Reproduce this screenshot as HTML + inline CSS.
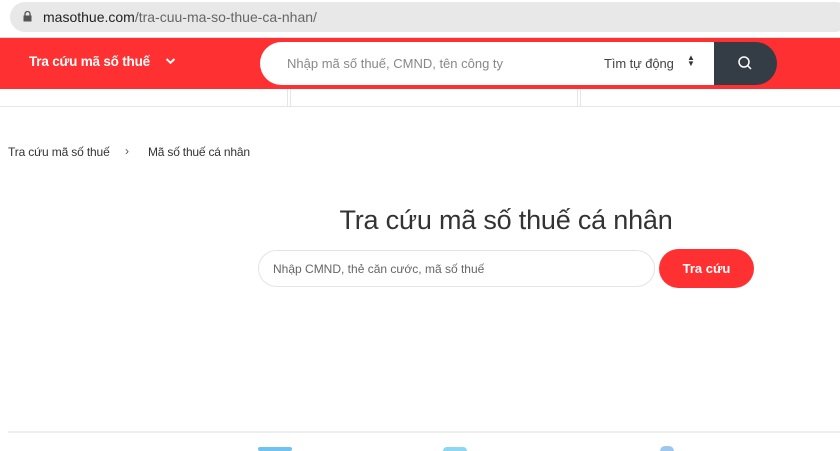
<!DOCTYPE html>
<html><head><meta charset="utf-8"><style>
*{margin:0;padding:0;box-sizing:border-box}
body{width:840px;height:450px;overflow:hidden;background:#fff;font-family:"Liberation Sans",Arial,sans-serif;position:relative}
.a{position:absolute}
</style></head><body>
<div class="a" style="left:0;top:0;width:840px;height:37px;background:#fff"></div>
<div class="a" style="left:10px;top:2px;width:840px;height:30px;background:#e8e8e8;border-radius:15px"></div>
<svg class="a" style="left:23px;top:11px" width="9" height="11" viewBox="0 0 9 11"><rect x="0.5" y="4.5" width="8" height="6" fill="#555"/><path d="M2 5V3a2.5 2.5 0 0 1 5 0v2" stroke="#555" stroke-width="1.3" fill="none"/></svg>
<div class="a" style="left:43px;top:9px;font-size:14px;color:#222">masothue.com<span style="color:#666">/tra-cuu-ma-so-thue-ca-nhan/</span></div>
<div class="a" style="left:0;top:37px;width:840px;height:1px;background:#ddd"></div>
<div class="a" style="left:0;top:38px;width:840px;height:51px;background:#fe3031"></div>
<div class="a" style="left:29px;top:54px;font-size:13.5px;font-weight:bold;color:#fff;letter-spacing:-0.2px">Tra cứu mã số thuế</div>
<svg class="a" style="left:165px;top:57px" width="11" height="8" viewBox="0 0 11 8"><path d="M1.5 2l4 3.8L9.5 2" stroke="#fff" stroke-width="2" fill="none"/></svg>
<div class="a" style="left:260px;top:42px;width:470px;height:43px;background:#fff;border-radius:22px 0 0 22px"></div>
<div class="a" style="left:287px;top:56px;font-size:13px;color:#888">Nhập mã số thuế, CMND, tên công ty</div>
<div class="a" style="left:604px;top:56px;font-size:13px;color:#444;letter-spacing:-0.1px">Tìm tự động</div>
<div class="a" style="left:687px;top:55px;font-size:8px;color:#333;line-height:6px">▲<br>▼</div>
<div class="a" style="left:714px;top:42px;width:63px;height:43px;background:#343c46;border-radius:0 22px 22px 0"></div>
<svg class="a" style="left:737px;top:55px" width="16" height="16" viewBox="0 0 16 16"><circle cx="7" cy="7" r="5" stroke="#fff" stroke-width="1.5" fill="none"/><path d="M10.5 10.5l3.5 3.5" stroke="#fff" stroke-width="1.5"/></svg>
<div class="a" style="left:0;top:89px;width:840px;height:18px;border-bottom:1px solid #e6e6e6"></div>
<div class="a" style="left:287px;top:89px;width:1px;height:18px;background:#e6e6e6"></div>
<div class="a" style="left:290px;top:89px;width:1px;height:18px;background:#e6e6e6"></div>
<div class="a" style="left:577px;top:89px;width:1px;height:18px;background:#e6e6e6"></div>
<div class="a" style="left:580px;top:89px;width:1px;height:18px;background:#e6e6e6"></div>
<div class="a" style="left:8px;top:145px;font-size:12px;color:#333;letter-spacing:-0.15px">Tra cứu mã số thuế</div>
<div class="a" style="left:125px;top:144px;font-size:12px;color:#555">›</div>
<div class="a" style="left:148px;top:145px;font-size:12px;color:#333;letter-spacing:-0.2px">Mã số thuế cá nhân</div>
<div class="a" style="left:0;top:205px;width:1012px;text-align:center;font-size:27px;color:#333;letter-spacing:-0.2px">Tra cứu mã số thuế cá nhân</div>
<div class="a" style="left:258px;top:250px;width:397px;height:37px;border:1px solid #e4e4e4;border-radius:19px"></div>
<div class="a" style="left:273px;top:262px;font-size:12px;color:#666">Nhập CMND, thẻ căn cước, mã số thuế</div>
<div class="a" style="left:659px;top:249px;width:95px;height:39px;background:#fe3031;border-radius:20px;color:#fff;font-size:13px;font-weight:bold;text-align:center;line-height:39px">Tra cứu</div>
<div class="a" style="left:8px;top:431px;width:832px;height:2px;background:#eee"></div>
<div class="a" style="left:258px;top:447px;width:34px;height:4px;background:#6fc3ee;border-radius:2px"></div>
<div class="a" style="left:443px;top:447px;width:24px;height:4px;background:#8fd6f0;border-radius:6px 6px 0 0"></div>
<div class="a" style="left:660px;top:446px;width:14px;height:5px;background:#9ec7ee;border-radius:6px 6px 0 0"></div>
</body></html>
